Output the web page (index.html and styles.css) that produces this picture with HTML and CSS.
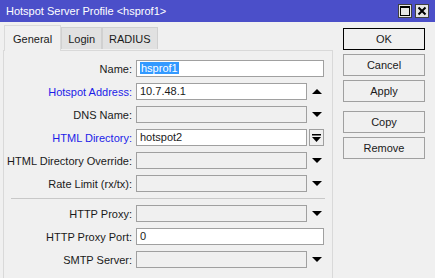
FILE: index.html
```html
<!DOCTYPE html>
<html>
<head>
  <meta charset="utf-8" />
  <title>Hotspot Server Profile</title>
  <link rel="stylesheet" href="styles.css">
</head>
<body>
  <div class="titlebar">
    <span class="title">Hotspot Server Profile &lt;hsprof1&gt;</span>
    <div class="win-controls">
      <span class="win-btn"><svg width="10" height="10" viewBox="0 0 10 10"><rect x="0.5" y="0.5" width="9" height="9" fill="none" stroke="#000"/><line x1="0" y1="1.5" x2="10" y2="1.5" stroke="#000"/></svg></span>
      <span class="win-btn"><svg width="10" height="10" viewBox="0 0 10 10"><path d="M1.5 1.5 L8.5 8.5 M8.5 1.5 L1.5 8.5" stroke="#000" stroke-width="2"/></svg></span>
    </div>
  </div>

  <div class="main">
    <div class="left">
      <div class="tabs">
        <span class="tab active">General</span>
        <span class="tab">Login</span>
        <span class="tab">RADIUS</span>
      </div>
      <div class="panel">
        <div class="row">
          <label>Name:</label>
          <div class="field"><span class="input wide"><span class="sel">hsprof1</span></span></div>
        </div>
        <div class="row">
          <label class="req">Hotspot Address:</label>
          <div class="field"><span class="input">10.7.48.1</span><span class="arrow up"></span></div>
        </div>
        <div class="row">
          <label>DNS Name:</label>
          <div class="field"><span class="input empty"></span><span class="arrow"></span></div>
        </div>
        <div class="row">
          <label class="req">HTML Directory:</label>
          <div class="field"><span class="input">hotspot2</span><span class="drop-btn"><svg width="9" height="8" viewBox="0 0 9 8"><rect x="0" y="0" width="9" height="1.5" fill="#000"/><path d="M0 3 L9 3 L4.5 8 Z" fill="#000"/></svg></span></div>
        </div>
        <div class="row">
          <label>HTML Directory Override:</label>
          <div class="field"><span class="input empty"></span><span class="arrow"></span></div>
        </div>
        <div class="row">
          <label>Rate Limit (rx/tx):</label>
          <div class="field"><span class="input empty"></span><span class="arrow"></span></div>
        </div>
        <div class="separator"></div>
        <div class="row">
          <label>HTTP Proxy:</label>
          <div class="field"><span class="input empty"></span><span class="arrow"></span></div>
        </div>
        <div class="row">
          <label>HTTP Proxy Port:</label>
          <div class="field"><span class="input wide">0</span></div>
        </div>
        <div class="row">
          <label>SMTP Server:</label>
          <div class="field"><span class="input empty"></span><span class="arrow"></span></div>
        </div>
      </div>
    </div>

    <div class="side">
      <button class="default">OK</button>
      <button>Cancel</button>
      <button>Apply</button>
      <button class="spaced">Copy</button>
      <button>Remove</button>
    </div>
  </div>
</body>
</html>
```

FILE: styles.css
```css
/* --- General --- */
:root {
  --bg: #f0f0f0;
  --title-bg: #4b4fc9;
  --border: #a0a0a0;
  --text: #1a1a1a;
  --req: #1c1ce8;
}
* {
  box-sizing: border-box;
}
body {
  margin: 0;
  background: var(--bg);
  color: var(--text);
  font-family: "Liberation Sans", Arial, sans-serif;
  font-size: 11px;
  overflow: hidden;
}

/* --- Title bar --- */
.titlebar {
  height: 22px;
  background: var(--title-bg);
  display: flex;
  align-items: center;
  justify-content: space-between;
  padding: 0 6px 0 6px;
}
.title {
  color: #fff;
  font-size: 11px;
}
.win-controls {
  display: flex;
  gap: 3px;
}
.win-btn {
  width: 14px;
  height: 14px;
  background: #e6e6e6;
  border: 1px solid #404040;
  display: flex;
  align-items: center;
  justify-content: center;
}

/* --- Layout --- */
.main {
  display: flex;
  gap: 10px;
}
.left {
  width: 333px;
  padding-left: 3px;
}

/* --- Tabs --- */
.tabs {
  display: flex;
  align-items: flex-end;
  height: 28px;
  padding-left: 1px;
  position: relative;
  z-index: 1;
}
.tab {
  height: 22px;
  padding: 0 6px;
  display: flex;
  align-items: center;
  background: #e1e1e1;
  border: 1px solid #d0d0d0;
  border-bottom: none;
  margin-bottom: 1px;
}
.tab.active {
  height: 26px;
  background: var(--bg);
  border-color: #dadada;
  padding: 0 8px;
  margin-bottom: -1px;
}

/* --- Panel --- */
.panel {
  height: 240px;
  border: 1px solid #d9d9d9;
  border-bottom: none;
  padding: 9px 0 0 0;
  display: flex;
  flex-direction: column;
  gap: 6px;
}
.row {
  display: grid;
  grid-template-columns: 128px 188px;
  gap: 4px;
  height: 17px;
  align-items: center;
}
.row label {
  text-align: right;
  white-space: nowrap;
}
.row label.req {
  color: var(--req);
}
.field {
  display: flex;
  align-items: center;
  height: 17px;
}
.input {
  width: 171px;
  height: 17px;
  background: #fff;
  border: 1px solid var(--border);
  padding: 0 3px;
  line-height: 15px;
  white-space: nowrap;
}
.input.wide {
  width: 188px;
}
.input.empty {
  background: var(--bg);
}
.sel {
  background: #3399ff;
  color: #fff;
  padding: 0 1px;
}
.arrow {
  width: 17px;
  height: 17px;
  display: flex;
  align-items: center;
  justify-content: center;
}
.arrow::after {
  content: "";
  border-left: 5px solid transparent;
  border-right: 5px solid transparent;
  border-top: 5px solid #000;
  margin-left: 2px;
}
.arrow.up::after {
  border-top: none;
  border-bottom: 5px solid #000;
}
.drop-btn {
  width: 15px;
  height: 17px;
  margin-left: 2px;
  border: 1px solid var(--border);
  display: flex;
  align-items: center;
  justify-content: center;
}
.separator {
  height: 1px;
  background: #c8c8c8;
  margin: 0 7px 0 7px;
}

/* --- Side buttons --- */
.side {
  display: flex;
  flex-direction: column;
  gap: 4px;
  padding-top: 6px;
  width: 82px;
}
button {
  height: 22px;
  font-family: inherit;
  font-size: 11px;
  color: var(--text);
  background: var(--bg);
  border: 1px solid var(--border);
  padding: 0;
}
button.default {
  border-color: #000;
}
button.spaced {
  margin-top: 5px;
}
```
